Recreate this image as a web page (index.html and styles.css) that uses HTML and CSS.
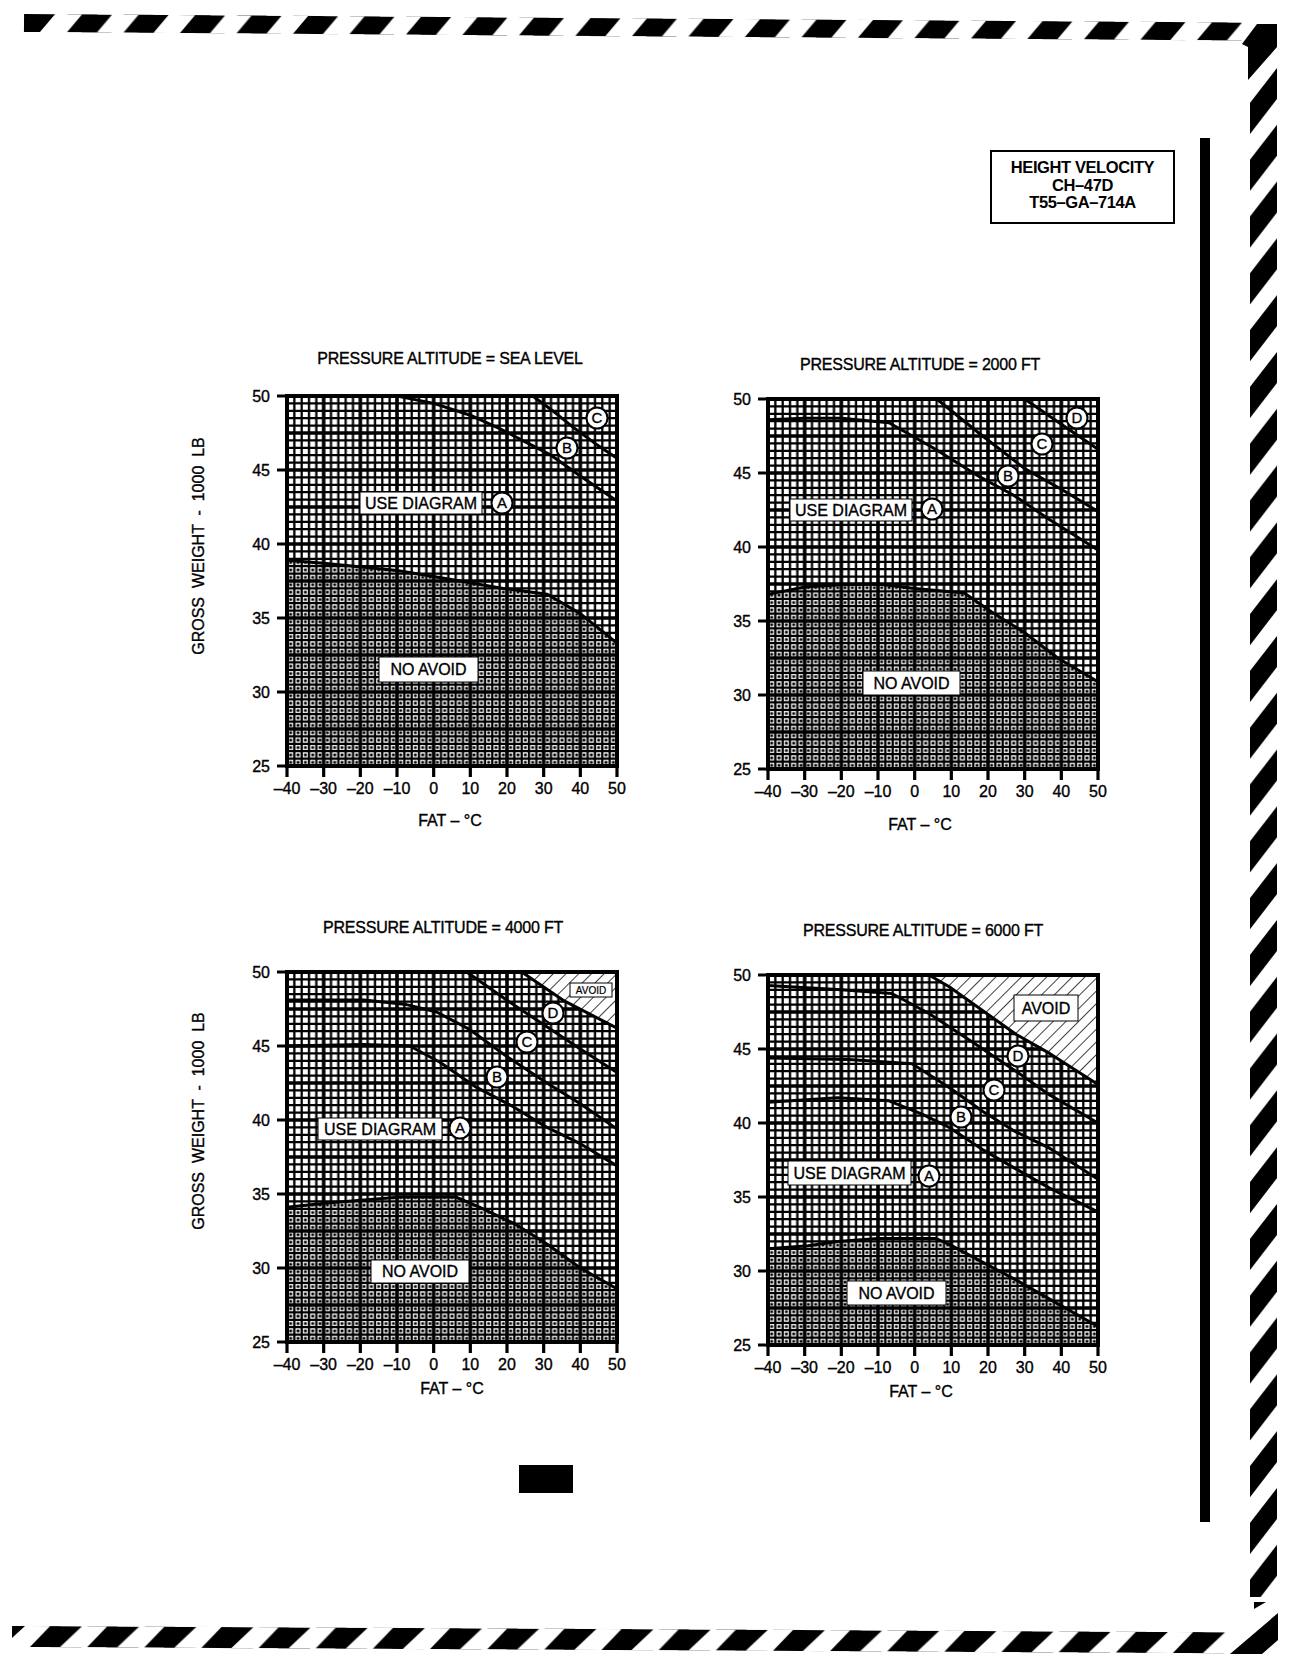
FILE: index.html
```html
<!DOCTYPE html>
<html lang="en">
<head>
<meta charset="utf-8">
<title>Height Velocity CH-47D</title>
<link rel="stylesheet" href="styles.css">
</head>
<body>
<div class="page">
  <svg class="stripes-top" viewBox="0 0 1240 44" width="1240" height="44">
    <defs>
      <pattern id="topStripe" x="67" y="14" width="56.5" height="18" patternUnits="userSpaceOnUse">
        <polygon points="0,18 30,18 45,0 15,0"/>
      </pattern>
    </defs>
    <g transform="rotate(0.4 24 23)">
      <polygon points="24,14 55,14 40,32 24,32"/>
      <rect x="67" y="14" width="1176" height="18" fill="url(#topStripe)"/>
    </g>
  </svg>

  <svg class="stripes-side" viewBox="1240 0 64 1675" width="64" height="1675">
    <defs>
      <pattern id="sideStripe" x="1250" y="68" width="27" height="56.8" patternUnits="userSpaceOnUse">
        <polygon points="27,0 27,31 0,66 0,35"/>
        <polygon points="27,-56.8 27,-25.8 0,9.2 0,-21.8"/>
      </pattern>
    </defs>
    <polygon points="1257,24 1277,24 1277,47 1248,80 1248,47 1242,44"/>
    <rect x="1250" y="68" width="27" height="1529" fill="url(#sideStripe)"/>
    <polygon points="1254,1602 1266,1602 1254,1609"/>
    <polygon points="1230,1654 1278,1613 1278,1640 1262,1654"/>
  </svg>

  <div class="main">
    <div class="content">
      <div class="header">
        <div class="id-box">
          <div>HEIGHT VELOCITY</div>
          <div>CH–47D</div>
          <div>T55–GA–714A</div>
        </div>
      </div>

      <div class="charts">
        <!-- Chart 1: Sea level -->
        <svg class="chart" viewBox="-117 -56 470 500" width="470" height="500">
          <defs>
            <pattern id="grid" width="36.667" height="37" patternUnits="userSpaceOnUse">
              <rect width="36.667" height="37" fill="#fff"/>
              <path d="M7.333 0V37M14.667 0V37M22 0V37M29.333 0V37M0 7.4H36.667M0 14.8H36.667M0 22.2H36.667M0 29.6H36.667" stroke="#000" stroke-width="2.3"/>
              <path d="M0 0V37M36.667 0V37M0 0H36.667M0 37H36.667" stroke="#000" stroke-width="3.6"/>
            </pattern>
            <pattern id="stip" width="7.333" height="7.4" patternUnits="userSpaceOnUse">
              <rect x="2.3" y="2.4" width="2.8" height="2.7" fill="#000"/>
            </pattern>
            <pattern id="hatch" width="9" height="9" patternUnits="userSpaceOnUse" patternTransform="rotate(45)">
              <rect width="9" height="9" fill="#fff"/>
              <path d="M0 0V9" stroke="#000" stroke-width="1.5"/>
            </pattern>
          </defs>
          <text class="title" x="163" y="-32">PRESSURE ALTITUDE = SEA LEVEL</text>
          <text class="ylab" transform="translate(-83,150) rotate(-90)">GROSS  WEIGHT  -  1000  LB</text>
          <rect width="330" height="370" fill="url(#grid)"/>
          <path d="M0,164.3 L36.7,167.2 L110,174.6 L146.7,180.6 L216.3,192.4 L260.3,198.3 L293.3,217.6 L330,247.2 L330,370 L0,370Z" fill="url(#stip)"/>
          <path class="curve" d="M0,164.3 L36.7,167.2 L110,174.6 L146.7,180.6 L216.3,192.4 L260.3,198.3 L293.3,217.6 L330,247.2"/>
          <path class="curve" d="M110,0 L146.7,7.4 L183.3,19.2 L212.7,32.6 L238.3,45.9 L264,59.2 L293.3,79.9 L330,105.1"/>
          <path class="curve" d="M245.7,0 L267.7,16.3 L286,31.1 L308,47.4 L330,62.2"/>
          <rect class="frame" width="330" height="370"/>
          <path class="ticks" d="M-10,0H0M-10,74H0M-10,148H0M-10,222H0M-10,296H0M-10,370H0M0,370V381M36.67,370V381M73.33,370V381M110,370V381M146.67,370V381M183.33,370V381M220,370V381M256.67,370V381M293.33,370V381M330,370V381"/>
          <g class="ynum"><text x="-17" y="6">50</text><text x="-17" y="80">45</text><text x="-17" y="154">40</text><text x="-17" y="228">35</text><text x="-17" y="302">30</text><text x="-17" y="376">25</text></g>
          <g class="xnum"><text x="0" y="398">–40</text><text x="36.67" y="398">–30</text><text x="73.33" y="398">–20</text><text x="110" y="398">–10</text><text x="146.67" y="398">0</text><text x="183.33" y="398">10</text><text x="220" y="398">20</text><text x="256.67" y="398">30</text><text x="293.33" y="398">40</text><text x="330" y="398">50</text></g>
          <text class="xlab" x="163" y="430">FAT – °C</text>
          <rect class="lbox" x="73" y="96" width="122" height="22"/><text class="ltext" x="134" y="112.7">USE DIAGRAM</text>
          <circle class="cbox" cx="215" cy="107" r="10.5"/><text class="ctext" x="215" y="112.2">A</text>
          <rect class="lbox" x="92" y="261" width="99" height="25"/><text class="ltext" x="141.5" y="279.2">NO AVOID</text>
          <circle class="cbox" cx="280" cy="52" r="10.5"/><text class="ctext" x="280" y="57.2">B</text>
          <circle class="cbox" cx="310" cy="22" r="10.5"/><text class="ctext" x="310" y="27.2">C</text>
        </svg>

        <!-- Chart 2: 2000 FT -->
        <svg class="chart shift" viewBox="-117 -56 470 500" width="470" height="500">
          <text class="title" x="152" y="-29.5">PRESSURE ALTITUDE = 2000 FT</text>
          <rect width="330" height="370" fill="url(#grid)"/>
          <path d="M0,195.4 L36.7,188 L73.3,185.7 L110,185 L146.7,189.4 L196.2,193.9 L223.7,213.1 L256.7,233.8 L289.7,259 L330,282.7 L330,370 L0,370Z" fill="url(#stip)"/>
          <path class="curve" d="M0,195.4 L36.7,188 L73.3,185.7 L110,185 L146.7,189.4 L196.2,193.9 L223.7,213.1 L256.7,233.8 L289.7,259 L330,282.7"/>
          <path class="curve" d="M0,20.7 L36.7,19.2 L73.3,19.2 L121,23.7 L165,48.8 L212.7,78.4 L245.7,96.2 L280.5,119.9 L330,151"/>
          <path class="curve" d="M168.7,0 L212.7,35.5 L256.7,69.6 L293.3,90.3 L330,112.5"/>
          <path class="curve" d="M256.7,0 L293.3,25.2 L330,50.3"/>
          <rect class="frame" width="330" height="370"/>
          <path class="ticks" d="M-10,0H0M-10,74H0M-10,148H0M-10,222H0M-10,296H0M-10,370H0M0,370V381M36.67,370V381M73.33,370V381M110,370V381M146.67,370V381M183.33,370V381M220,370V381M256.67,370V381M293.33,370V381M330,370V381"/>
          <g class="ynum"><text x="-17" y="6">50</text><text x="-17" y="80">45</text><text x="-17" y="154">40</text><text x="-17" y="228">35</text><text x="-17" y="302">30</text><text x="-17" y="376">25</text></g>
          <g class="xnum"><text x="0" y="398">–40</text><text x="36.67" y="398">–30</text><text x="73.33" y="398">–20</text><text x="110" y="398">–10</text><text x="146.67" y="398">0</text><text x="183.33" y="398">10</text><text x="220" y="398">20</text><text x="256.67" y="398">30</text><text x="293.33" y="398">40</text><text x="330" y="398">50</text></g>
          <text class="xlab" x="152" y="431">FAT – °C</text>
          <rect class="lbox" x="22" y="100" width="122" height="22"/><text class="ltext" x="83" y="116.7">USE DIAGRAM</text>
          <circle class="cbox" cx="164" cy="110" r="10.5"/><text class="ctext" x="164" y="115.2">A</text>
          <rect class="lbox" x="95" y="272" width="97" height="24"/><text class="ltext" x="143.5" y="289.7">NO AVOID</text>
          <circle class="cbox" cx="240" cy="77" r="10.5"/><text class="ctext" x="240" y="82.2">B</text>
          <circle class="cbox" cx="274" cy="45" r="10.5"/><text class="ctext" x="274" y="50.2">C</text>
          <circle class="cbox" cx="309" cy="19" r="10.5"/><text class="ctext" x="309" y="24.2">D</text>
        </svg>

        <!-- Chart 3: 4000 FT -->
        <svg class="chart" viewBox="-117 -56 470 500" width="470" height="500">
          <text class="title" x="156" y="-39">PRESSURE ALTITUDE = 4000 FT</text>
          <text class="ylab" transform="translate(-83,149) rotate(-90)">GROSS  WEIGHT  -  1000  LB</text>
          <rect width="330" height="370" fill="url(#grid)"/>
          <path d="M0,235.3 L40.3,230.9 L77,227.9 L113.7,225 L168.7,225 L192.9,235.3 L227.3,251.6 L260.3,272.3 L293.3,296 L330,316.7 L330,370 L0,370Z" fill="url(#stip)"/>
          <path d="M234.7,0 L275.8,28.1 L330,56.2 L330,0Z" fill="url(#hatch)"/>
          <path class="curve" d="M0,235.3 L40.3,230.9 L77,227.9 L113.7,225 L168.7,225 L192.9,235.3 L227.3,251.6 L260.3,272.3 L293.3,296 L330,316.7"/>
          <path class="curve" d="M0,74 L77,72.5 L122.8,74 L152.9,90.3 L189.6,115.4 L226.2,134.7 L259.9,155.4 L293.3,171.7 L330,193.9"/>
          <path class="curve" d="M0,28.1 L77,28.1 L119.5,32.6 L149.6,40 L183,57.7 L219.6,84.4 L259.9,111 L293.3,131.7 L330,156.9"/>
          <path class="curve" d="M179.7,0 L219.6,28.1 L259.9,54.8 L293.3,77 L330,100.6"/>
          <path class="curve" d="M234.7,0 L275.8,28.1 L330,56.2"/>
          <rect class="frame" width="330" height="370"/>
          <path class="ticks" d="M-10,0H0M-10,74H0M-10,148H0M-10,222H0M-10,296H0M-10,370H0M0,370V381M36.67,370V381M73.33,370V381M110,370V381M146.67,370V381M183.33,370V381M220,370V381M256.67,370V381M293.33,370V381M330,370V381"/>
          <g class="ynum"><text x="-17" y="6">50</text><text x="-17" y="80">45</text><text x="-17" y="154">40</text><text x="-17" y="228">35</text><text x="-17" y="302">30</text><text x="-17" y="376">25</text></g>
          <g class="xnum"><text x="0" y="398">–40</text><text x="36.67" y="398">–30</text><text x="73.33" y="398">–20</text><text x="110" y="398">–10</text><text x="146.67" y="398">0</text><text x="183.33" y="398">10</text><text x="220" y="398">20</text><text x="256.67" y="398">30</text><text x="293.33" y="398">40</text><text x="330" y="398">50</text></g>
          <text class="xlab" x="165" y="422">FAT – °C</text>
          <rect class="lbox" x="283" y="11" width="42" height="14"/><text class="stext" x="304" y="21.6">AVOID</text>
          <rect class="lbox" x="31" y="146" width="124" height="22"/><text class="ltext" x="93" y="162.7">USE DIAGRAM</text>
          <circle class="cbox" cx="173" cy="156" r="10.5"/><text class="ctext" x="173" y="161.2">A</text>
          <rect class="lbox" x="84" y="288" width="98" height="23"/><text class="ltext" x="133" y="305.2">NO AVOID</text>
          <circle class="cbox" cx="210" cy="105" r="10.5"/><text class="ctext" x="210" y="110.2">B</text>
          <circle class="cbox" cx="240" cy="70" r="10.5"/><text class="ctext" x="240" y="75.2">C</text>
          <circle class="cbox" cx="266" cy="41" r="10.5"/><text class="ctext" x="266" y="46.2">D</text>
        </svg>

        <!-- Chart 4: 6000 FT -->
        <svg class="chart shift" viewBox="-117 -56 470 500" width="470" height="500">
          <text class="title" x="155" y="-39">PRESSURE ALTITUDE = 6000 FT</text>
          <rect width="330" height="370" fill="url(#grid)"/>
          <path d="M0,273.8 L40.3,270.8 L69.7,266.4 L110,263.4 L167.6,263.4 L181.2,269.4 L214.5,287.1 L247.9,304.9 L281.6,324.1 L330,351.5 L330,370 L0,370Z" fill="url(#stip)"/>
          <path d="M161,0 L181.2,11.8 L214.5,35.5 L247.9,59.2 L281.6,78.4 L330,109.5 L330,0Z" fill="url(#hatch)"/>
          <path class="curve" d="M0,273.8 L40.3,270.8 L69.7,266.4 L110,263.4 L167.6,263.4 L181.2,269.4 L214.5,287.1 L247.9,304.9 L281.6,324.1 L330,351.5"/>
          <path class="curve" d="M0,127.3 L69.7,122.8 L121,125.8 L154,139.1 L181.2,152.4 L214.5,174.6 L247.9,193.9 L281.6,213.1 L330,236.8"/>
          <path class="curve" d="M0,82.9 L80.7,84.4 L144.1,88.8 L181.2,112.5 L214.5,136.2 L247.9,156.9 L281.6,173.2 L330,204.2"/>
          <path class="curve" d="M0,10.4 L73.3,14.8 L123.9,18.5 L161,38.5 L201.3,65.1 L247.9,96.2 L281.6,119.9 L330,148"/>
          <path class="curve" d="M161,0 L181.2,11.8 L214.5,35.5 L247.9,59.2 L281.6,78.4 L330,109.5"/>
          <rect class="frame" width="330" height="370"/>
          <path class="ticks" d="M-10,0H0M-10,74H0M-10,148H0M-10,222H0M-10,296H0M-10,370H0M0,370V381M36.67,370V381M73.33,370V381M110,370V381M146.67,370V381M183.33,370V381M220,370V381M256.67,370V381M293.33,370V381M330,370V381"/>
          <g class="ynum"><text x="-17" y="6">50</text><text x="-17" y="80">45</text><text x="-17" y="154">40</text><text x="-17" y="228">35</text><text x="-17" y="302">30</text><text x="-17" y="376">25</text></g>
          <g class="xnum"><text x="0" y="398">–40</text><text x="36.67" y="398">–30</text><text x="73.33" y="398">–20</text><text x="110" y="398">–10</text><text x="146.67" y="398">0</text><text x="183.33" y="398">10</text><text x="220" y="398">20</text><text x="256.67" y="398">30</text><text x="293.33" y="398">40</text><text x="330" y="398">50</text></g>
          <text class="xlab" x="153" y="422">FAT – °C</text>
          <rect class="lbox" x="246" y="20" width="64" height="26"/><text class="ltext" x="278" y="38.7">AVOID</text>
          <rect class="lbox" x="20" y="186" width="123" height="24"/><text class="ltext" x="81.5" y="203.7">USE DIAGRAM</text>
          <circle class="cbox" cx="161" cy="201" r="10.5"/><text class="ctext" x="161" y="206.2">A</text>
          <rect class="lbox" x="79" y="306" width="99" height="24"/><text class="ltext" x="128.5" y="323.7">NO AVOID</text>
          <circle class="cbox" cx="193" cy="142" r="10.5"/><text class="ctext" x="193" y="147.2">B</text>
          <circle class="cbox" cx="226" cy="115" r="10.5"/><text class="ctext" x="226" y="120.2">C</text>
          <circle class="cbox" cx="250" cy="81" r="10.5"/><text class="ctext" x="250" y="86.2">D</text>
        </svg>
      </div>

      <div class="page-mark"></div>
    </div>
    <div class="rule"></div>
  </div>

  <svg class="stripes-bottom" viewBox="0 1610 1240 65" width="1240" height="65">
    <defs>
      <pattern id="bottomStripe" x="30" y="1626" width="57.15" height="21" patternUnits="userSpaceOnUse">
        <polygon points="0,21 30,21 52,0 20,0"/>
      </pattern>
    </defs>
    <g transform="rotate(0.3 30 1636)">
      <polygon points="12,1626 25,1626 12,1638"/>
      <rect x="30" y="1626" width="1196" height="21" fill="url(#bottomStripe)"/>
    </g>
  </svg>
</div>
</body>
</html>
```

FILE: styles.css
```css
html, body {
  margin: 0;
  padding: 0;
  background: #fff;
}

body {
  font-family: "Liberation Sans", Arial, sans-serif;
  color: #000;
}

.page {
  width: 1304px;
  height: 1675px;
  display: grid;
  grid-template-columns: 1240px 64px;
  grid-template-rows: 44px 1566px 65px;
  overflow: hidden;
}

svg {
  display: block;
  overflow: visible;
}

.stripes-top {
  grid-column: 1;
  grid-row: 1;
}

.stripes-side {
  grid-column: 2;
  grid-row: 1 / 4;
}

.stripes-bottom {
  grid-column: 1;
  grid-row: 3;
}

.main {
  grid-column: 1;
  grid-row: 2;
  display: flex;
  align-items: flex-start;
}

.content {
  width: 1200px;
  padding-top: 106px;
}

.rule {
  width: 10px;
  height: 1384px;
  margin-top: 94px;
  background: #000;
}

.header {
  display: flex;
  justify-content: flex-end;
  padding-right: 25px;
}

.id-box {
  box-sizing: border-box;
  width: 185px;
  height: 74px;
  border: 2px solid #000;
  padding-top: 7px;
  text-align: center;
  font-weight: bold;
  font-size: 16.5px;
  line-height: 17.5px;
  letter-spacing: -0.4px;
}

.charts {
  margin-top: 116px;
  padding-left: 170px;
  display: grid;
  grid-template-columns: 470px 470px;
  column-gap: 11px;
  row-gap: 73px;
  align-items: start;
}

.chart.shift {
  margin-top: 3px;
}

.chart text {
  font-family: "Liberation Sans", Arial, sans-serif;
  fill: #000;
  stroke: #000;
  stroke-width: 0.35px;
}

.title {
  font-size: 16px;
  text-anchor: middle;
  letter-spacing: -0.2px;
}

.ylab {
  font-size: 16px;
  text-anchor: middle;
  white-space: pre;
}

.xlab {
  font-size: 16px;
  text-anchor: middle;
}

.ynum text {
  font-size: 16px;
  text-anchor: end;
}

.xnum text {
  font-size: 16px;
  text-anchor: middle;
}

.curve {
  fill: none;
  stroke: #000;
  stroke-width: 3;
  stroke-linejoin: round;
  stroke-linecap: round;
}

.frame {
  fill: none;
  stroke: #000;
  stroke-width: 4;
}

.ticks {
  fill: none;
  stroke: #000;
  stroke-width: 3.2;
}

.lbox {
  fill: #fff;
  stroke: #000;
  stroke-width: 1;
}

.ltext {
  font-size: 16px;
  text-anchor: middle;
}

.chart .stext {
  font-size: 10px;
  text-anchor: middle;
  stroke-width: 0.2px;
}

.cbox {
  fill: #fff;
  stroke: #000;
  stroke-width: 2;
}

.ctext {
  font-size: 15px;
  text-anchor: middle;
}

.page-mark {
  width: 54px;
  height: 28px;
  margin-top: 46px;
  margin-left: 519px;
  background: #000;
}
```
